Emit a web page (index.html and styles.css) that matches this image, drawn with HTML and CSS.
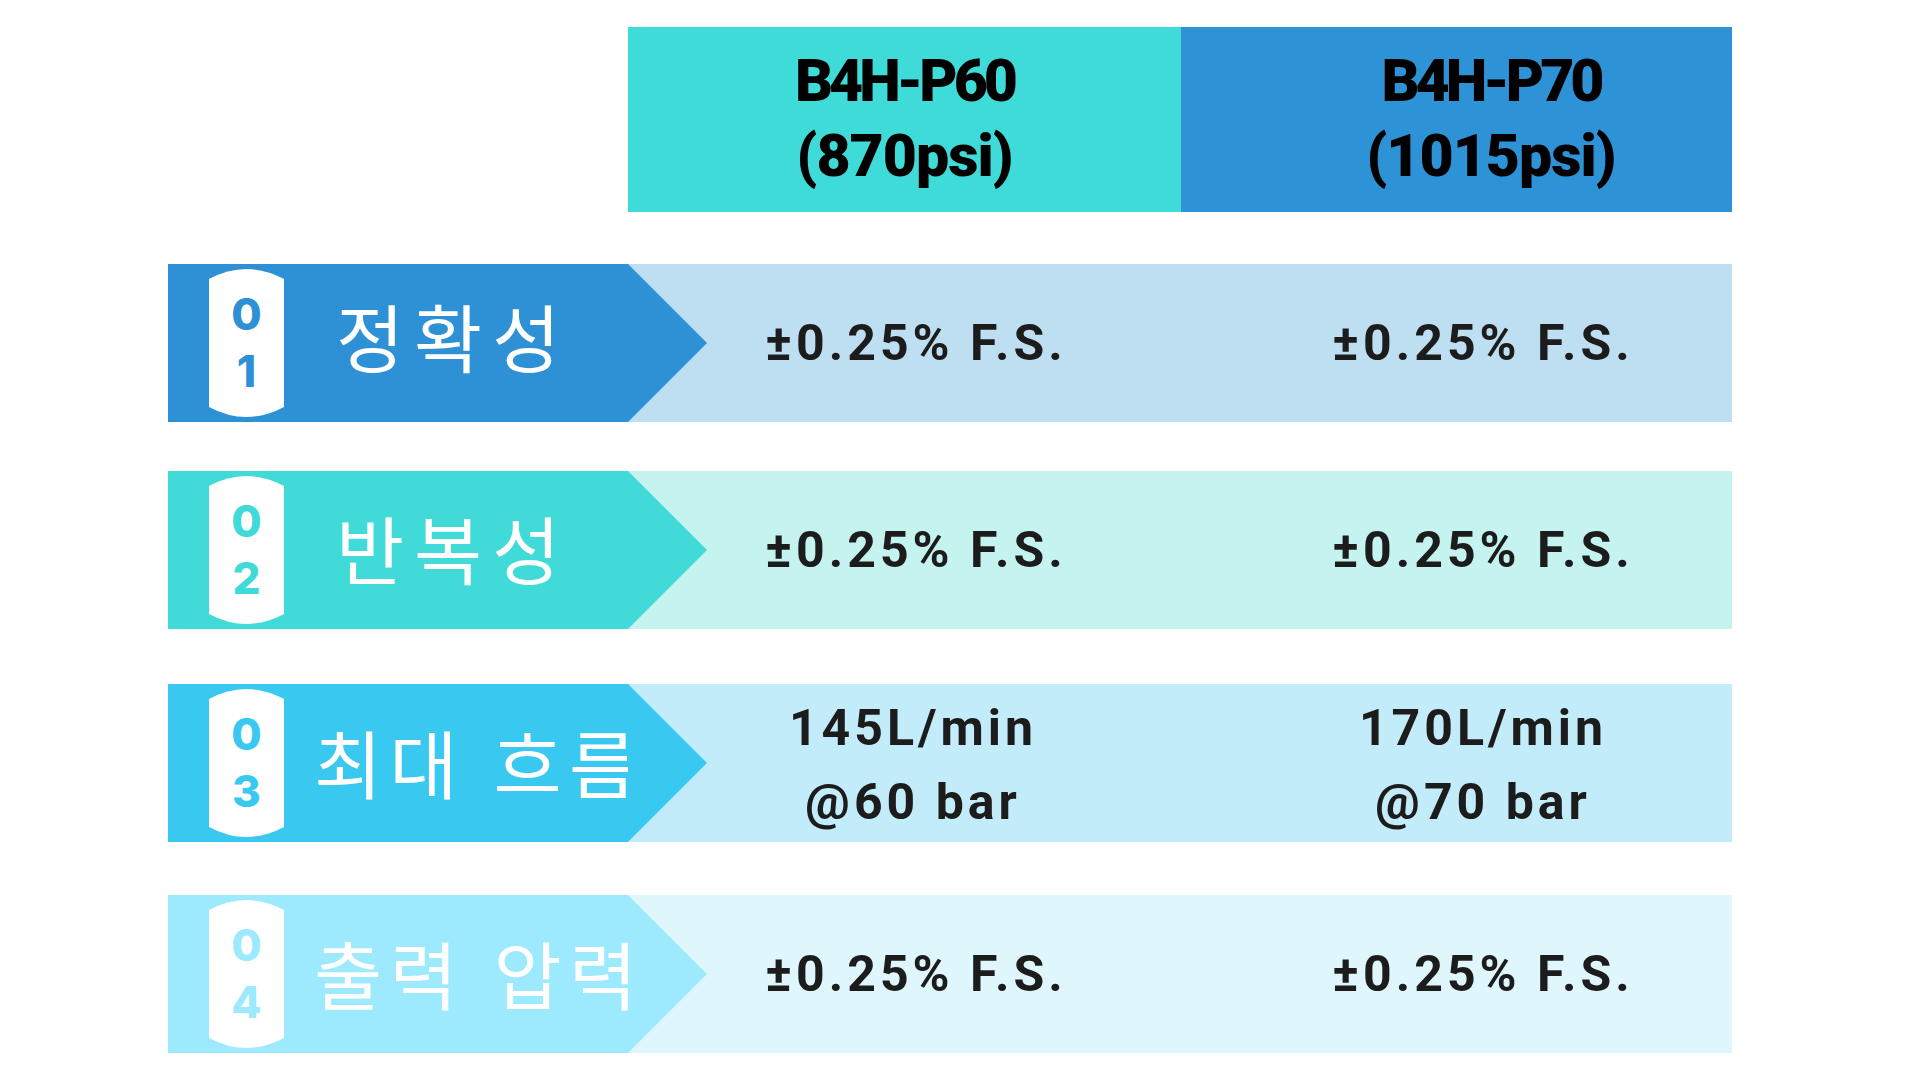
FILE: index.html
```html
<!DOCTYPE html>
<html lang="ko">
<head>
<meta charset="utf-8">
<title>B4H 사양 비교</title>
<link rel="stylesheet" href="styles.css">
</head>
<body>
<main class="sheet">
  <header class="head">
    <div class="head-cell head-a"><span class="model">B4H-P60</span><span class="psi">(870psi)</span></div>
    <div class="head-cell head-b"><span class="model">B4H-P70</span><span class="psi">(1015psi)</span></div>
  </header>

  <section class="row row1">
    <div class="label">
      <div class="badge"><span>0</span><span>1</span></div>
      <div class="name">정확성</div>
    </div>
    <div class="values">
      <div class="val val-a">±0.25% F.S.</div>
      <div class="val val-b">±0.25% F.S.</div>
    </div>
  </section>

  <section class="row row2">
    <div class="label">
      <div class="badge"><span>0</span><span>2</span></div>
      <div class="name">반복성</div>
    </div>
    <div class="values">
      <div class="val val-a">±0.25% F.S.</div>
      <div class="val val-b">±0.25% F.S.</div>
    </div>
  </section>

  <section class="row row3">
    <div class="label">
      <div class="badge"><span>0</span><span>3</span></div>
      <div class="name wide">최대 흐름</div>
    </div>
    <div class="values">
      <div class="val val-a two"><span>145L/min</span><span>@60 bar</span></div>
      <div class="val val-b two"><span>170L/min</span><span>@70 bar</span></div>
    </div>
  </section>

  <section class="row row4">
    <div class="label">
      <div class="badge"><span>0</span><span>4</span></div>
      <div class="name wide">출력 압력</div>
    </div>
    <div class="values">
      <div class="val val-a">±0.25% F.S.</div>
      <div class="val val-b">±0.25% F.S.</div>
    </div>
  </section>
</main>
</body>
</html>
```

FILE: styles.css
```css
* { box-sizing: border-box; }

html, body {
  margin: 0;
  padding: 0;
  background: #ffffff;
}

.sheet {
  width: 1920px;
  height: 1080px;
  padding: 27px 0 0 168px;
  display: flex;
  flex-direction: column;
}

/* header */
.head {
  display: flex;
  margin-left: 460px;
  width: 1104px;
  height: 185px;
}

.head-cell {
  display: flex;
  flex-direction: column;
  align-items: center;
  justify-content: center;
  text-align: center;
  font-family: Roboto, "Liberation Sans", sans-serif;
  font-weight: 900;
  font-size: 59px;
  line-height: 75px;
  color: #000000;
  padding-bottom: 4px;
}

.head-cell .model { letter-spacing: -4px; }
.head-cell .psi { letter-spacing: -1px; }

.head-a {
  width: 553px;
  background: #3fdbd8;
}

.head-b {
  width: 551px;
  background: #2e92d6;
  padding-left: 69px;
}

/* rows */
.row {
  display: flex;
  width: 1564px;
  height: 158px;
}

.row1 { margin-top: 52px; }
.row2 { margin-top: 49px; }
.row3 { margin-top: 55px; }
.row4 { margin-top: 53px; }

.label {
  position: relative;
  width: 460px;
  flex: none;
  display: flex;
  align-items: center;
  padding-left: 41px;
  background: var(--main);
  z-index: 1;
}

.label::after {
  content: "";
  position: absolute;
  left: 100%;
  top: 0;
  width: 0;
  height: 0;
  border-top: 79px solid transparent;
  border-bottom: 79px solid transparent;
  border-left: 79px solid var(--main);
}

.badge {
  width: 75px;
  height: 148px;
  flex: none;
  background: #ffffff;
  clip-path: path('M0,10 Q37.5,-10 75,10 L75,138 Q37.5,158 0,138 Z');
  display: flex;
  flex-direction: column;
  align-items: center;
  justify-content: center;
  font-family: Inter, "Liberation Sans", sans-serif;
  font-weight: 800;
  font-size: 44px;
  line-height: 57px;
  color: var(--main);
}

.badge span { display: block; }

.name {
  margin-left: 52px;
  font-family: "Noto Sans CJK KR", "Noto Sans", sans-serif;
  font-weight: 400;
  font-size: 74px;
  line-height: 1;
  letter-spacing: 10px;
  color: #ffffff;
  white-space: nowrap;
  padding-bottom: 16px;
}

.row2 .name { padding-bottom: 6px; }

.name.wide {
  margin-left: 30px;
  letter-spacing: 7.5px;
  padding-bottom: 4px;
}

.values {
  flex: 1;
  display: flex;
  background: var(--soft);
}

.val {
  display: flex;
  flex-direction: column;
  align-items: center;
  justify-content: center;
  text-align: center;
  font-family: Roboto, "Liberation Sans", sans-serif;
  font-weight: 700;
  font-size: 50px;
  line-height: 72px;
  letter-spacing: 4px;
  color: #1c1c1c;
  white-space: nowrap;
}

.val.two { line-height: 74px; padding-top: 4px; }

.val-a { width: 560px; padding-left: 16px; }
.val-b { width: 544px; padding-left: 46px; }

.row3 .val-a { padding-left: 10px; }

.row1 { --main: #2e91d5; --soft: #bedef1; }
.row2 { --main: #40dbd8; --soft: #c5f3f0; }
.row3 { --main: #39c9f0; --soft: #c2ecf9; }
.row4 { --main: #9de9fd; --soft: #def6fc; }
```
